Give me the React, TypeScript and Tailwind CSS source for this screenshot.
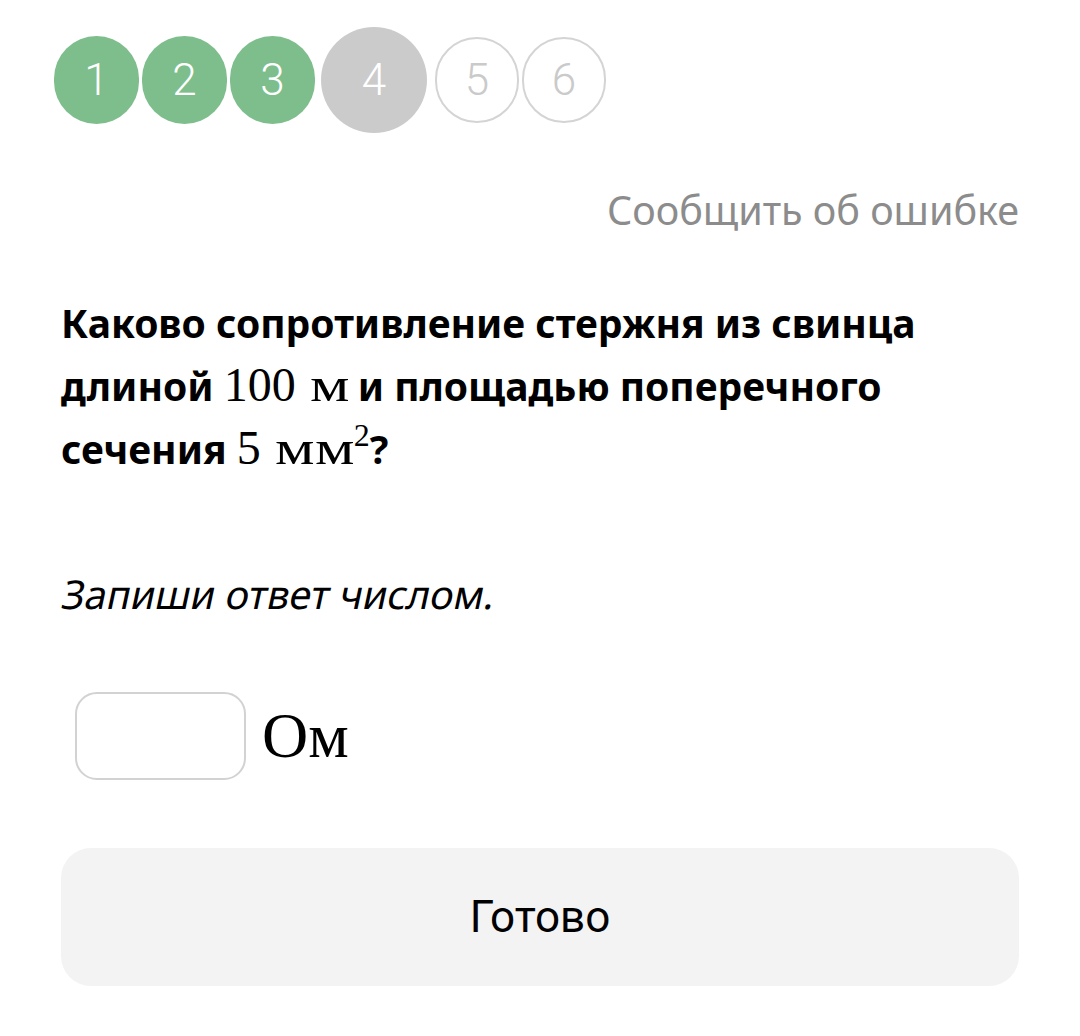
import React from "react";

const steps = [
  { n: 1, state: "done" },
  { n: 2, state: "done" },
  { n: 3, state: "done" },
  { n: 4, state: "current" },
  { n: 5, state: "todo" },
  { n: 6, state: "todo" },
];

function Step({ n, state }: { n: number; state: string }) {
  if (state === "done") {
    return (
      <div className="w-[85px] h-[88px] rounded-full bg-[#7dbe8c] text-white flex items-center justify-center text-[44px] font-light">
        {n}
      </div>
    );
  }
  if (state === "current") {
    return (
      <div className="w-[106px] h-[106px] rounded-full bg-[#cbcbcb] text-white flex items-center justify-center text-[44px] font-light ml-[3px] mr-[5px]">
        {n}
      </div>
    );
  }
  return (
    <div className="w-[84px] h-[86px] rounded-full border-2 border-[#d4d4d4] text-[#cacaca] flex items-center justify-center text-[44px] font-light">
      {n}
    </div>
  );
}

// wide upright unit letter, like the math renderer draws it
function Unit({ ch }: { ch: string }) {
  return (
    <span className="inline-block w-[40px] pl-[2px]">
      <span className="inline-block origin-left scale-x-[1.3]">{ch}</span>
    </span>
  );
}

export default function App() {
  return (
    <div className="w-[1080px] h-[1036px] bg-white px-[61px] font-['Noto_Sans',sans-serif] text-black">
      {/* Steps */}
      <div className="flex items-center gap-[3px] pt-[27px] -ml-[7px] font-['Roboto',sans-serif]">
        {steps.map((s) => (
          <Step key={s.n} n={s.n} state={s.state} />
        ))}
      </div>

      <div className="flex justify-end mt-[49px]">
        <span className="text-[39.5px] text-[#8c8c8c] leading-[56px]">Сообщить об ошибке</span>
      </div>

      {/* Question */}
      <p className="mt-[54px] text-[39px] font-bold leading-[62px]">
        Каково сопротивление стержня из свинца длиной{" "}
        <span className="font-['Liberation_Serif',serif] font-normal text-[48px]">
          100 <Unit ch="м" />
        </span>{" "}
        и площадью поперечного сечения{" "}
        <span className="font-['Liberation_Serif',serif] font-normal text-[48px]">
          5 <Unit ch="м" />
          <Unit ch="м" />
          <sup className="text-[32px] -top-[18px] ml-[1px]">2</sup>
        </span>
        ?
      </p>

      <p className="mt-[86px] ml-[2px] text-[39.6px] leading-[56px]">
        <span className="inline-block -skew-x-12">Запиши ответ числом.</span>
      </p>

      {/* Answer */}
      <div className="flex items-center mt-[70px] ml-[14px]">
        <input
          type="text"
          className="w-[171px] h-[88px] rounded-[22px] border-2 border-[#d2d2d2] outline-none px-4 text-[40px]"
        />
        <span className="ml-[16px] font-['Liberation_Serif',serif] text-[64px] leading-none">Ом</span>
      </div>

      <button className="mt-[68px] w-full h-[138px] rounded-[30px] bg-[#f3f3f3] text-[44px] font-['Roboto',sans-serif]">
        Готово
      </button>
    </div>
  );
}
